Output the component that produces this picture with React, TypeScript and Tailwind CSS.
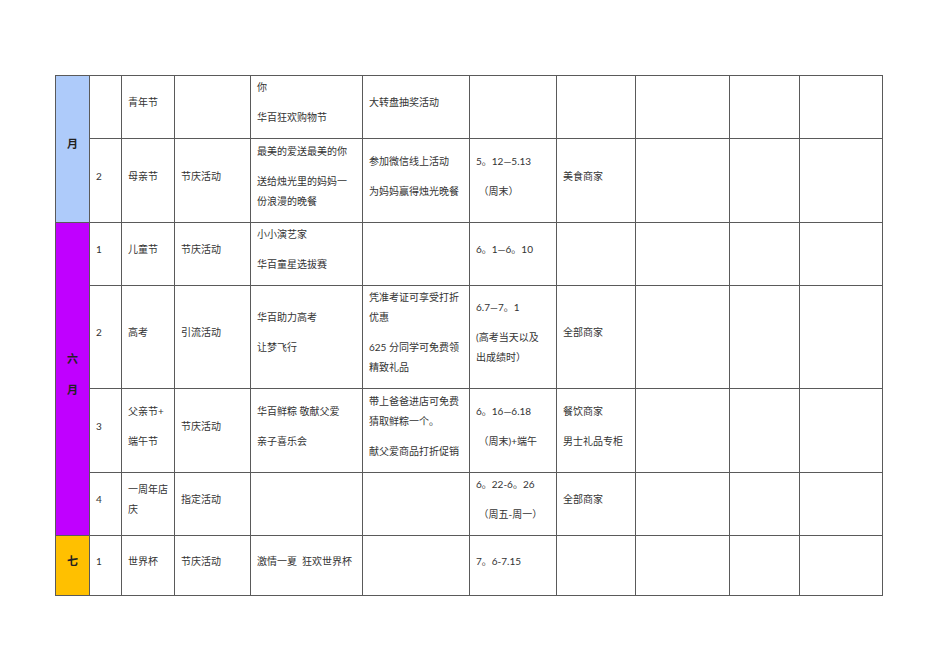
import React from 'react'

type Cell = string[][] // paragraphs -> lines

type Row = {
  h: number
  num: string
  name: Cell
  kind: Cell
  theme: Cell
  detail: Cell
  date: Cell
  shops: Cell
}

const rows: Row[] = [
  {
    h: 63,
    num: '',
    name: [['青年节']],
    kind: [],
    theme: [['你'], ['华百狂欢购物节']],
    detail: [['大转盘抽奖活动']],
    date: [],
    shops: [],
  },
  {
    h: 84,
    num: '2',
    name: [['母亲节']],
    kind: [['节庆活动']],
    theme: [['最美的爱送最美的你'], ['送给烛光里的妈妈一', '份浪漫的晚餐']],
    detail: [['参加微信线上活动'], ['为妈妈赢得烛光晚餐']],
    date: [['5。12—5.13'], [' （周末）']],
    shops: [['美食商家']],
  },
  {
    h: 63,
    num: '1',
    name: [['儿童节']],
    kind: [['节庆活动']],
    theme: [['小小演艺家'], ['华百童星选拔赛']],
    detail: [],
    date: [['6。1—6。10']],
    shops: [],
  },
  {
    h: 103,
    num: '2',
    name: [['高考']],
    kind: [['引流活动']],
    theme: [['华百助力高考'], ['让梦飞行']],
    detail: [['凭准考证可享受打折', '优惠'], ['625 分同学可免费领', '精致礼品']],
    date: [['6.7—7。1'], ['(高考当天以及', '出成绩时）']],
    shops: [['全部商家']],
  },
  {
    h: 84,
    num: '3',
    name: [['父亲节+'], ['端午节']],
    kind: [['节庆活动']],
    theme: [['华百鲜粽 敬献父爱'], ['亲子喜乐会']],
    detail: [['带上爸爸进店可免费', '猜取鲜粽一个。'], ['献父爱商品打折促销']],
    date: [['6。16—6.18'], [' （周末)+端午']],
    shops: [['餐饮商家'], ['男士礼品专柜']],
  },
  {
    h: 63,
    num: '4',
    name: [['一周年店', '庆']],
    kind: [['指定活动']],
    theme: [],
    detail: [],
    date: [['6。22-6。26'], [' （周五-周一）']],
    shops: [['全部商家']],
  },
  {
    h: 60,
    num: '1',
    name: [['世界杯']],
    kind: [['节庆活动']],
    theme: [['激情一夏  狂欢世界杯']],
    detail: [],
    date: [['7。6-7.15']],
    shops: [],
  },
]

const td = 'border border-[#5a5a5a] align-middle pl-[6px] pr-[4px] pb-[10px] pt-0'

function Paras({ cell }: { cell: Cell }) {
  return (
    <>
      {cell.map((p, i) => (
        <div key={i} className={i < cell.length - 1 ? 'mb-[10px]' : ''}>
          {p.map((line, j) => (
            <div key={j} className="whitespace-pre">
              {line}
            </div>
          ))}
        </div>
      ))}
    </>
  )
}

function MonthCell({ span, bg, chars }: { span: number; bg: string; chars: string[] }) {
  return (
    <td rowSpan={span} className={`border border-[#5a5a5a] align-middle text-center pb-[10px] ${bg}`}>
      <div className="flex flex-col items-center gap-[11px] text-[11px] font-bold text-[#222] leading-[20px]">
        {chars.map((c, i) => (
          <span key={i}>{c}</span>
        ))}
      </div>
    </td>
  )
}

export default function App() {
  const widths = [34, 32, 53, 76, 112, 107, 87, 79, 94, 70, 83]
  return (
    <div className="min-h-[672px] w-[950px] bg-white pt-[75px] pl-[55px]">
      <table
        className="table-fixed border-collapse w-[827px] text-[10px] leading-[20px] text-[#333]"
        style={{ fontFamily: 'Lato, "Noto Sans CJK SC", sans-serif' }}
      >
        <colgroup>
          {widths.map((w, i) => (
            <col key={i} style={{ width: w }} />
          ))}
        </colgroup>
        <tbody>
          {rows.map((r, i) => (
            <tr key={i} style={{ height: r.h }}>
              {i === 0 && <MonthCell span={2} bg="bg-[#aecbfa]" chars={['月']} />}
              {i === 2 && <MonthCell span={4} bg="bg-[#c000ff]" chars={['六', '月']} />}
              {i === 6 && <MonthCell span={1} bg="bg-[#ffc000]" chars={['七']} />}
              <td className={td}>{r.num}</td>
              <td className={td}>
                <Paras cell={r.name} />
              </td>
              <td className={td}>
                <Paras cell={r.kind} />
              </td>
              <td className={`${td} border-l-[#8a8a8a]`}>
                <Paras cell={r.theme} />
              </td>
              <td className={td}>
                <Paras cell={r.detail} />
              </td>
              <td className={`${td} border-l-[#8a8a8a]`}>
                <Paras cell={r.date} />
              </td>
              <td className={`${td} border-l-[#8a8a8a]`}>
                <Paras cell={r.shops} />
              </td>
              <td className={td}></td>
              <td className={`${td} border-l-[#8a8a8a]`}></td>
              <td className={td}></td>
            </tr>
          ))}
        </tbody>
      </table>
    </div>
  )
}
